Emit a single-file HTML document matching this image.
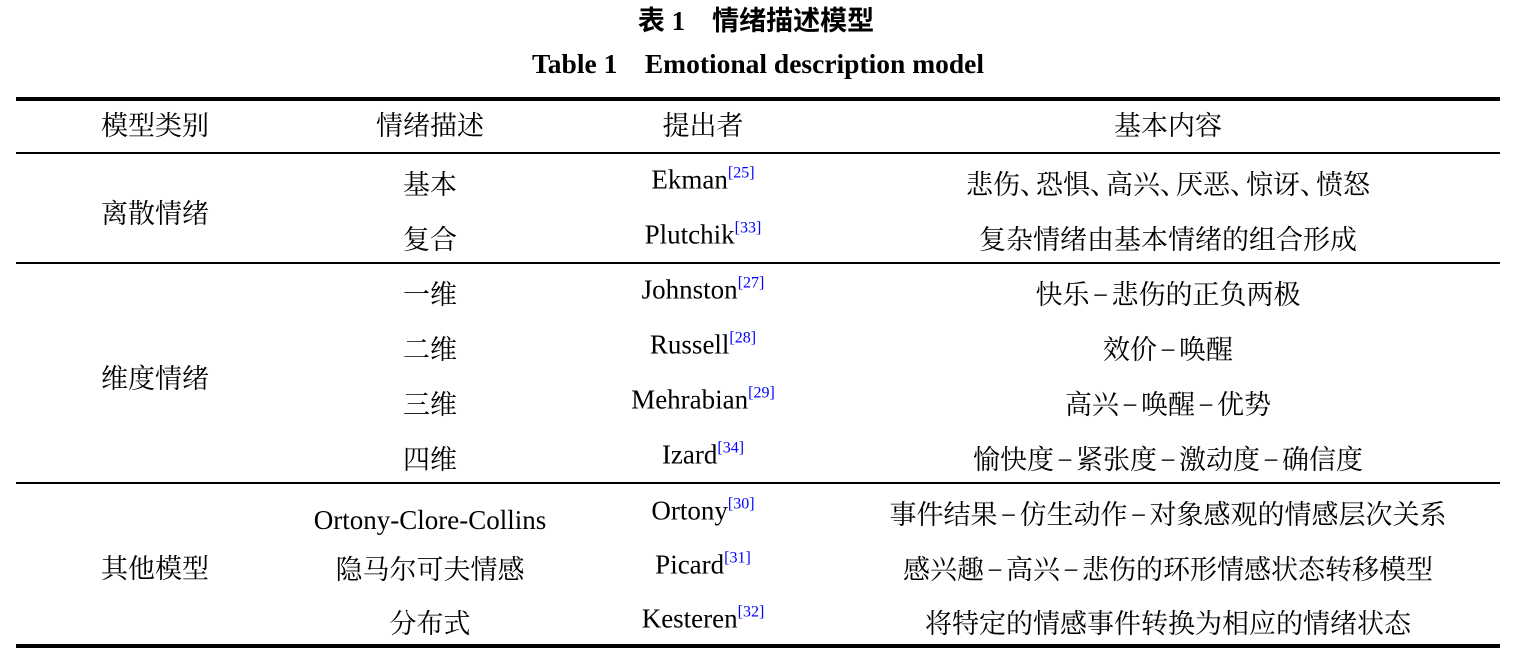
<!DOCTYPE html>
<html><head><meta charset="utf-8"><style>
html,body{margin:0;padding:0;background:#fff;}
body{width:1516px;height:658px;position:relative;overflow:hidden;font-family:"Liberation Serif","Noto Serif CJK SC",serif;color:#000;}
.t{position:absolute;white-space:nowrap;transform:translate(-50%,-50%);font-size:27px;line-height:32px;}
.l{font-size:27px;}
.l sup{font-size:16px;color:#00f;vertical-align:0;position:relative;top:-11px;}
.c{display:inline-block;width:16px;overflow:hidden;vertical-align:top;}
.d{display:inline-block;width:22px;text-align:center;}
.r{position:absolute;left:16px;width:1484px;background:#000;}
</style></head><body>
<div class="t" style="left:756px;top:21px;font-weight:bold;font-family:'Liberation Serif','Noto Sans CJK SC',sans-serif;font-size:27px">表 1&nbsp;&nbsp;&nbsp;&nbsp;情绪描述模型</div>
<div class="t" style="left:758px;top:64px;font-weight:bold;font-size:27.5px">Table 1&nbsp;&nbsp;&nbsp;&nbsp;Emotional description model</div>
<div class="r" style="top:97px;height:4px"></div>
<div class="r" style="top:152px;height:2px"></div>
<div class="r" style="top:262px;height:2px"></div>
<div class="r" style="top:482px;height:2px"></div>
<div class="r" style="top:644px;height:4px"></div>

<div class="t" style="left:155px;top:126px">模型类别</div>
<div class="t" style="left:430px;top:126px">情绪描述</div>
<div class="t" style="left:703px;top:126px">提出者</div>
<div class="t" style="left:1168px;top:126px">基本内容</div>

<div class="t" style="left:155px;top:214px">离散情绪</div>
<div class="t" style="left:155px;top:379px">维度情绪</div>
<div class="t" style="left:155px;top:569px">其他模型</div>

<div class="t" style="left:430px;top:185px">基本</div>
<div class="t" style="left:430px;top:240px">复合</div>
<div class="t" style="left:430px;top:295px">一维</div>
<div class="t" style="left:430px;top:350px">二维</div>
<div class="t" style="left:430px;top:405px">三维</div>
<div class="t" style="left:430px;top:460px">四维</div>
<div class="t l" style="left:430px;top:520px">Ortony-Clore-Collins</div>
<div class="t" style="left:430px;top:570px">隐马尔可夫情感</div>
<div class="t" style="left:430px;top:624px">分布式</div>

<div class="t l" style="left:703px;top:182px">Ekman<sup>[25]</sup></div>
<div class="t l" style="left:703px;top:237px">Plutchik<sup>[33]</sup></div>
<div class="t l" style="left:703px;top:292px">Johnston<sup>[27]</sup></div>
<div class="t l" style="left:703px;top:347px">Russell<sup>[28]</sup></div>
<div class="t l" style="left:703px;top:402px">Mehrabian<sup>[29]</sup></div>
<div class="t l" style="left:703px;top:457px">Izard<sup>[34]</sup></div>
<div class="t l" style="left:703px;top:513px">Ortony<sup>[30]</sup></div>
<div class="t l" style="left:703px;top:567px">Picard<sup>[31]</sup></div>
<div class="t l" style="left:703px;top:621px">Kesteren<sup>[32]</sup></div>

<div class="t" style="left:1168px;top:185px">悲伤<span class="c">、</span>恐惧<span class="c">、</span>高兴<span class="c">、</span>厌恶<span class="c">、</span>惊讶<span class="c">、</span>愤怒</div>
<div class="t" style="left:1168px;top:240px">复杂情绪由基本情绪的组合形成</div>
<div class="t" style="left:1168px;top:295px">快乐<span class="d">−</span>悲伤的正负两极</div>
<div class="t" style="left:1168px;top:350px">效价<span class="d">−</span>唤醒</div>
<div class="t" style="left:1168px;top:405px">高兴<span class="d">−</span>唤醒<span class="d">−</span>优势</div>
<div class="t" style="left:1168px;top:460px">愉快度<span class="d">−</span>紧张度<span class="d">−</span>激动度<span class="d">−</span>确信度</div>
<div class="t" style="left:1168px;top:515px">事件结果<span class="d">−</span>仿生动作<span class="d">−</span>对象感观的情感层次关系</div>
<div class="t" style="left:1168px;top:570px">感兴趣<span class="d">−</span>高兴<span class="d">−</span>悲伤的环形情感状态转移模型</div>
<div class="t" style="left:1168px;top:624px">将特定的情感事件转换为相应的情绪状态</div>
</body></html>
